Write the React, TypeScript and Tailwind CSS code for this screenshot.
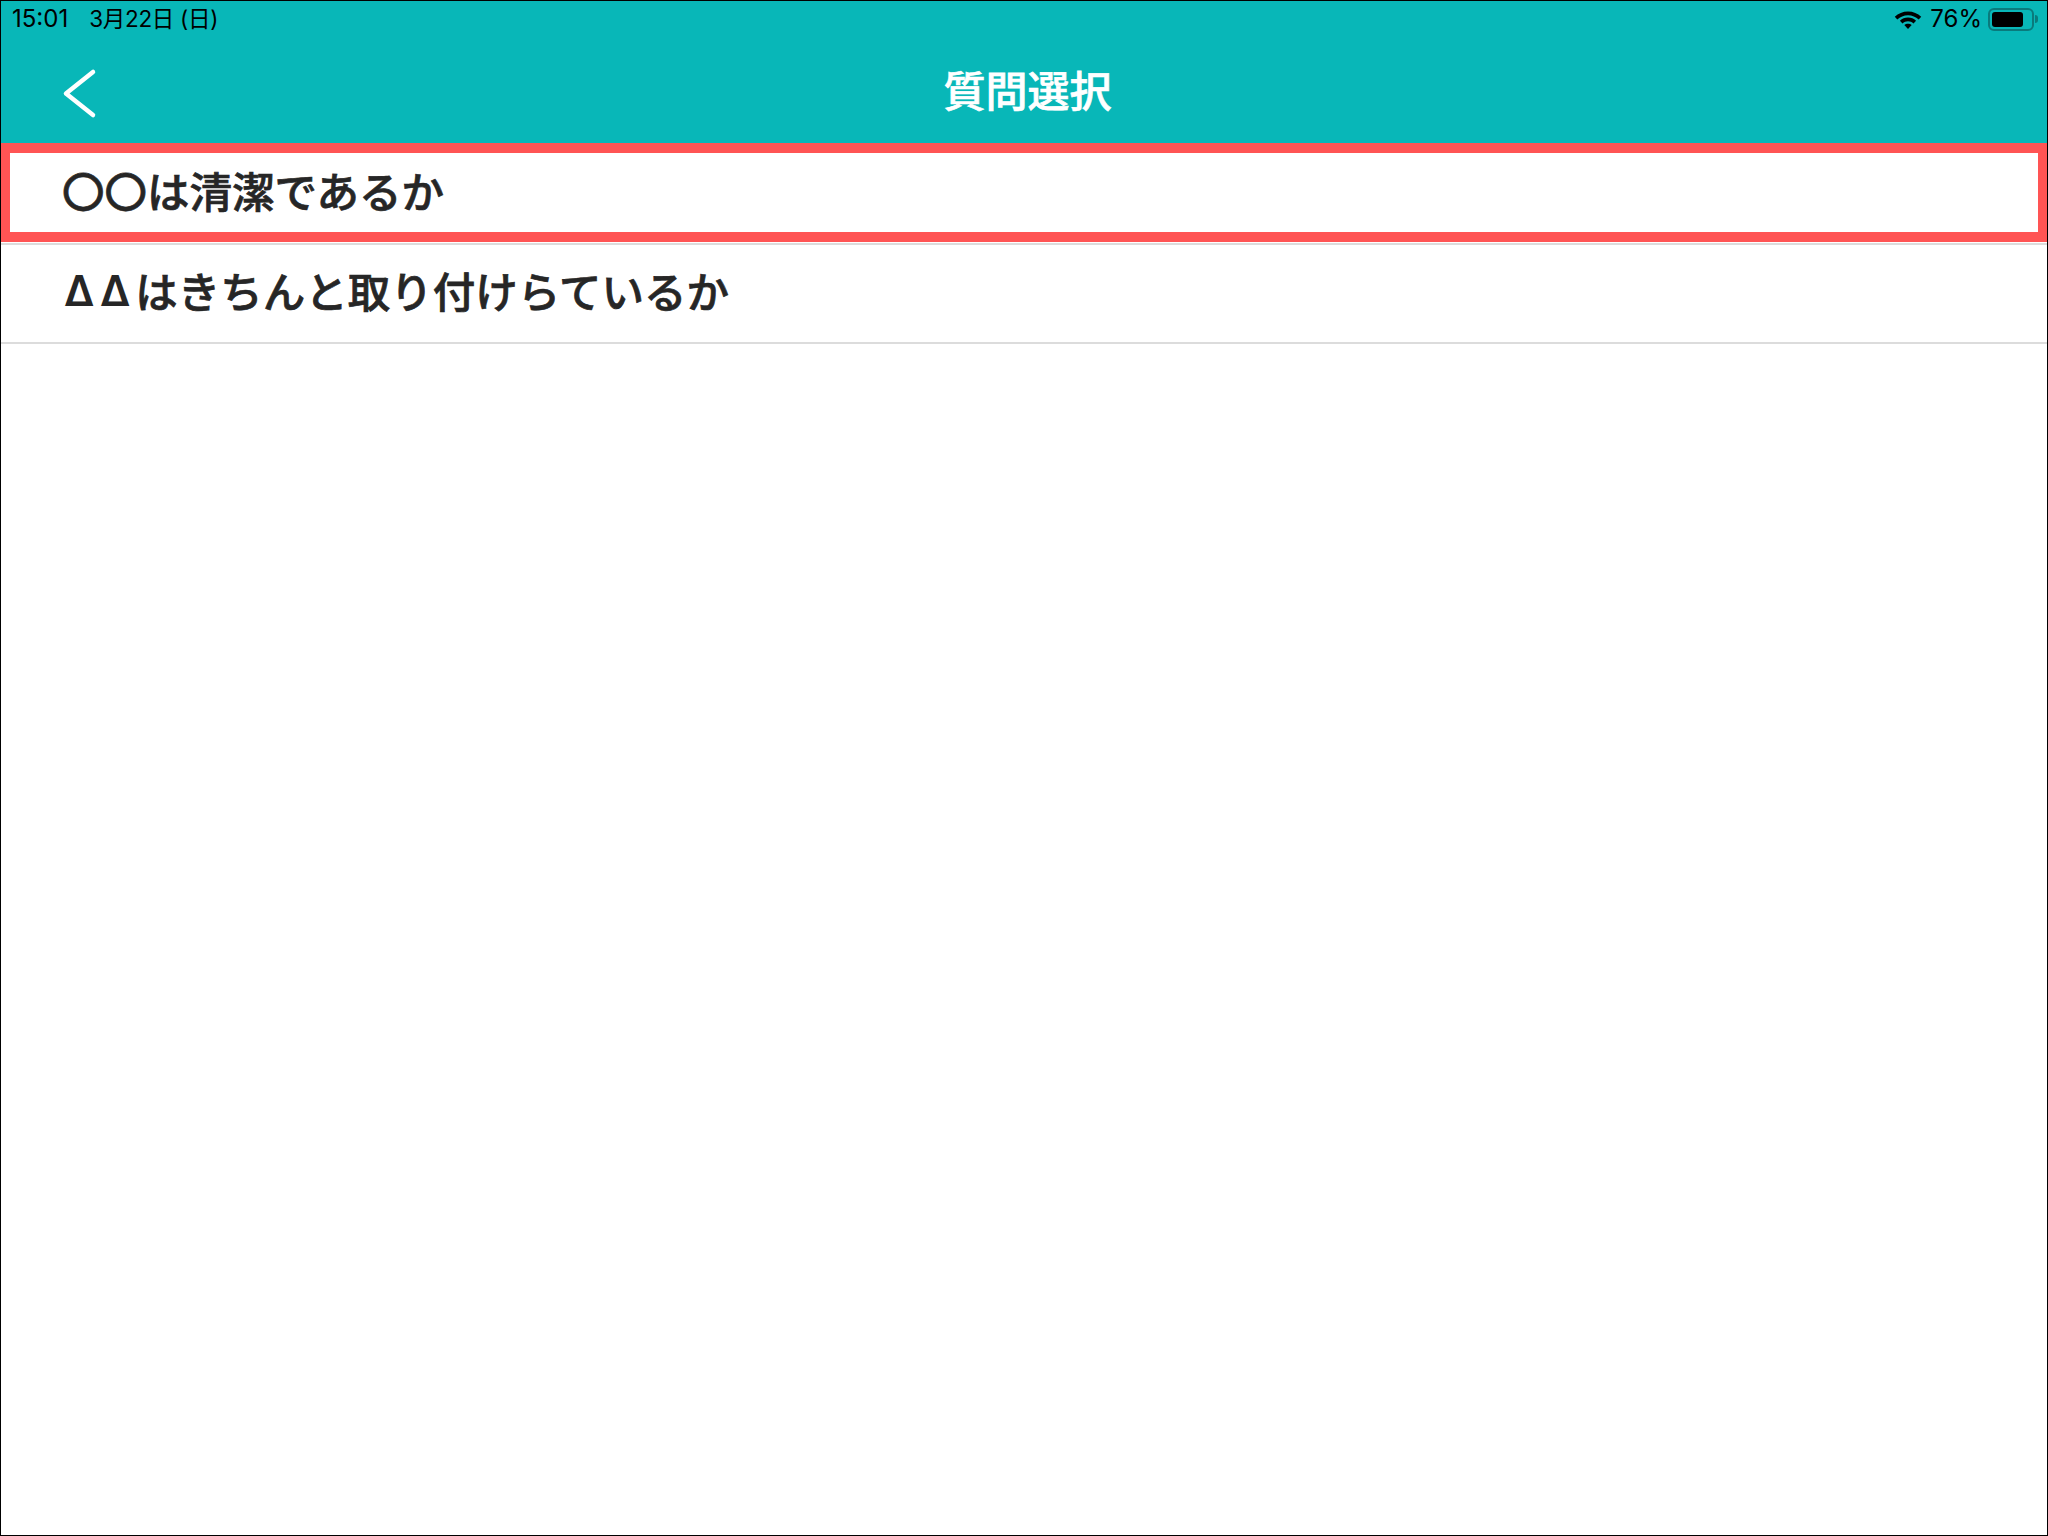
const cjk = "font-['Noto_Sans_CJK_JP',sans-serif]";

function StatusBar() {
  return (
    <div className="h-[36px] flex items-center justify-between pl-[11px] pr-[9px] text-black">
      <div className="flex items-center gap-[21px] font-['Inter','Noto_Sans_CJK_JP',sans-serif]">
        <span className="text-[24px]">15:01</span>
        <span className="text-[22.5px] tracking-[-0.3px]">3月22日 (日)</span>
      </div>
      <div className="flex items-center gap-[7px]">
        <svg width="30" height="23" viewBox="0 0 26 20">
          <path d="M13 3C8.500 3 4.500 4.700 1.500 7.500L3.700 9.900C6.200 7.600 9.400 6.200 13 6.200C16.600 6.200 19.800 7.600 22.300 9.900L24.500 7.500C21.500 4.700 17.500 3 13 3Z" fill="#000" />
          <path d="M13 8.300C10.300 8.300 7.900 9.300 6 11L8.200 13.400C9.500 12.300 11.200 11.600 13 11.600C14.800 11.600 16.500 12.300 17.800 13.400L20 11C18.100 9.300 15.700 8.300 13 8.300Z" fill="#000" />
          <path d="M13 13.600C11.800 13.600 10.700 14 9.800 14.800L13 18.300L16.200 14.800C15.300 14 14.200 13.600 13 13.600Z" fill="#000" />
        </svg>
        <span className="text-[24px] font-['Inter',sans-serif]">76%</span>
        <div className="-ml-[1px] flex items-center gap-[1px]">
          <div className="w-[46px] h-[23px] rounded-[6px] border-2 border-[#0a7a7c] p-[2px]">
            <div className="w-[31px] h-full rounded-[3px] bg-black" />
          </div>
          <div className="w-[3px] h-[8px] rounded-r-full bg-[#0a7a7c]" />
        </div>
      </div>
    </div>
  );
}

function Header() {
  return (
    <div className="bg-[#08b7b8]">
      <StatusBar />
      <div className="relative h-[106px] flex items-center justify-center">
        <svg className="absolute left-[60px] top-[30px]" width="40" height="56" viewBox="0 0 40 56" fill="none">
          <path d="M32 5L5 26.500L32 48" stroke="#fff" strokeWidth="4.500" strokeLinecap="round" strokeLinejoin="round" />
        </svg>
        <span className={`${cjk} text-white text-[42px] font-medium [-webkit-text-stroke:0.7px_#ffffff] leading-none -mt-[2px] ml-[7px]`}>質問選択</span>
      </div>
    </div>
  );
}

export default function App() {
  return (
    <div className="w-[2048px] h-[1536px] bg-white border border-black overflow-hidden flex flex-col">
      <Header />
      <div className={`relative ${cjk} text-[42.5px] font-medium [-webkit-text-stroke:0.7px_#262626] text-[#262626]`}>
        <div className="h-[102px] pl-[61px] pb-[7px] flex items-center border-b-2 border-[#dcdcdc]">
          〇〇は清潔であるか
        </div>
        <div className="h-[99px] pl-[61px] pb-[8px] flex items-center border-b-2 border-[#dcdcdc]">
          <span className="font-['Inter',sans-serif] text-[42px] font-semibold [-webkit-text-stroke:0px] tracking-[5px] pl-[2px] pt-[2px]">ΔΔ</span>はきちんと取り付けらているか
        </div>
        {/* 赤枠 */}
        <div className="absolute -left-[1px] -right-[1px] top-0 h-[99px] border-[10px] border-[#ff5454]" />
      </div>
    </div>
  );
}
